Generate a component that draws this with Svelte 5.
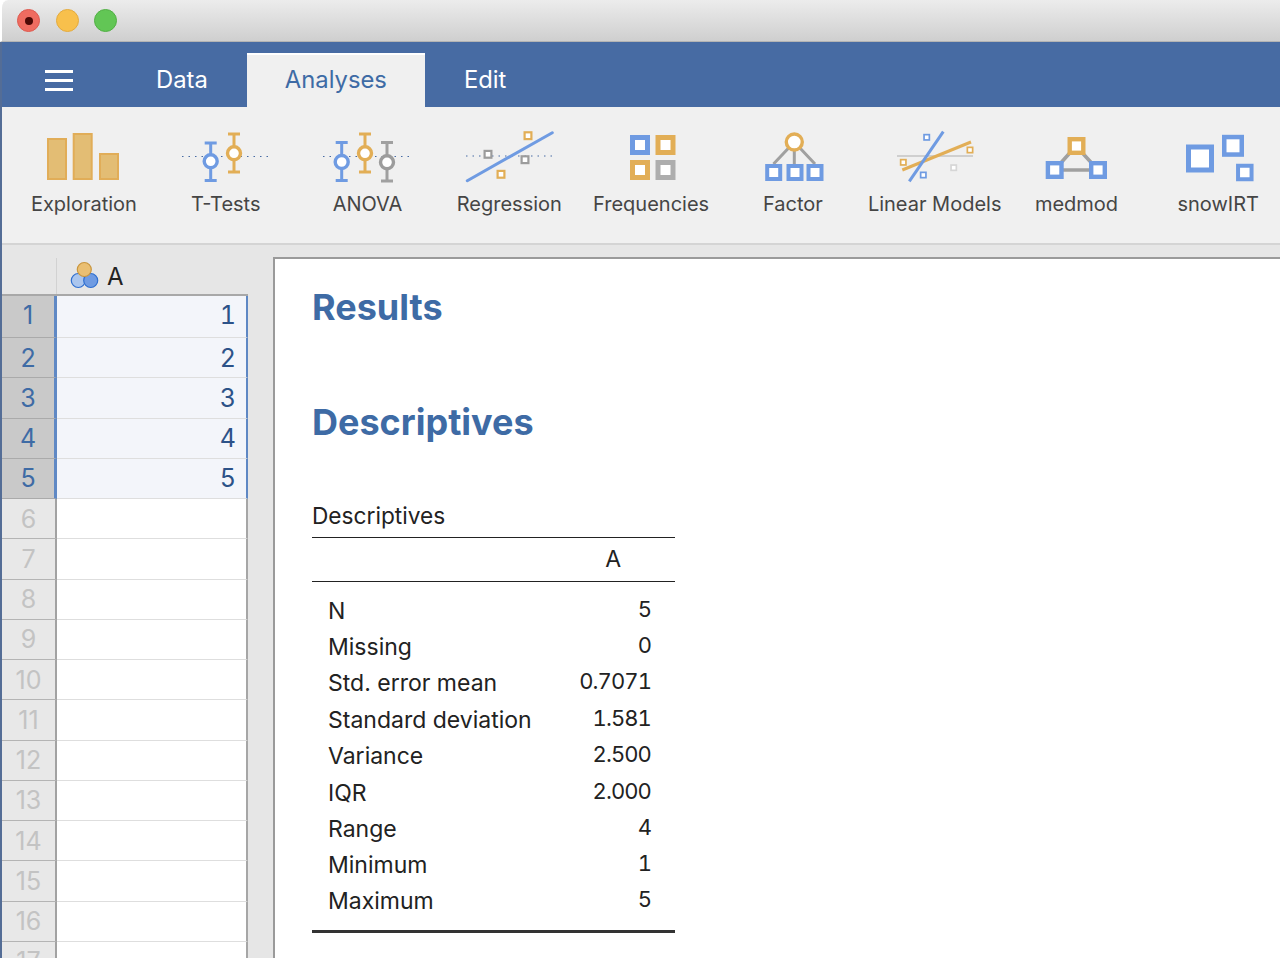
<script lang="ts">
  const rowCount = 17;
  const filled = 5;
  const rows = Array.from({ length: rowCount }, (_, i) => i + 1);

  const stats = [
    ["N", "5"],
    ["Missing", "0"],
    ["Std. error mean", "0.7071"],
    ["Standard deviation", "1.581"],
    ["Variance", "2.500"],
    ["IQR", "2.000"],
    ["Range", "4"],
    ["Minimum", "1"],
    ["Maximum", "5"],
  ];
</script>

{#snippet errorBar(x: number, top: number, bottom: number, cy: number, tone: string)}
  <g class={tone}>
    <path class="line" d="M{x - 6} {top}H{x + 6}M{x} {top}V{bottom}M{x - 6} {bottom}H{x + 6}" />
    <circle class="box" cx={x} cy={cy} r="6.5" />
  </g>
{/snippet}

{#snippet sq(cx: number, cy: number, size: number, weight: number, tone: string)}
  <rect
    class="box {tone}"
    x={cx - size / 2 + weight / 2}
    y={cy - size / 2 + weight / 2}
    width={size - weight}
    height={size - weight}
    style="stroke-width:{weight}"
  />
{/snippet}

<div class="window">
  <header class="titlebar">
    <span class="light red"><i></i></span>
    <span class="light amber"></span>
    <span class="light green"></span>
  </header>

  <div class="body">
    <nav class="tabs">
      <button class="menu" aria-label="Menu"><span></span><span></span><span></span></button>
      <div class="tab">Data</div>
      <div class="tab active">Analyses</div>
      <div class="tab">Edit</div>
    </nav>

    <section class="ribbon">
      <div class="tool">
        <svg viewBox="0 0 100 60">
          <rect class="bar" x="14" y="14" width="18" height="40" />
          <rect class="bar" x="39.7" y="9" width="18" height="45" />
          <rect class="bar" x="66" y="29" width="18" height="25" />
        </svg>
        <span>Exploration</span>
      </div>
      <div class="tool">
        <svg viewBox="0 0 100 60">
          <path class="dots" d="M6 31.5H92" />
          {@render errorBar(34.7, 18, 55.5, 36.3, "bl")}
          {@render errorBar(58, 9, 47, 28.3, "or")}
        </svg>
        <span>T-Tests</span>
      </div>
      <div class="tool">
        <svg viewBox="0 0 100 60">
          <path class="dots" d="M6 31.5H92" />
          {@render errorBar(24.7, 17.5, 55.5, 37, "bl")}
          {@render errorBar(48, 9, 47, 28.3, "or")}
          {@render errorBar(70, 17.5, 56, 37.3, "gr")}
        </svg>
        <span>ANOVA</span>
      </div>
      <div class="tool">
        <svg viewBox="0 0 100 60">
          <path class="dots" d="M7 31H95" />
          <path class="line bl thick" d="M8.3 55.7L93.3 7.7" />
          {@render sq(69, 10.7, 9, 2.2, "or")}
          {@render sq(29, 29.3, 9, 2.2, "gr")}
          {@render sq(66, 34.7, 9, 2.2, "gr")}
          {@render sq(42, 49.3, 9, 2.2, "or")}
        </svg>
        <span>Regression</span>
      </div>
      <div class="tool">
        <svg viewBox="0 0 100 60">
          {@render sq(39, 20, 20, 5, "bl")}
          {@render sq(64.5, 20, 20, 5, "or")}
          {@render sq(39, 45, 20, 5, "or")}
          {@render sq(64.5, 45, 20, 5, "gy")}
        </svg>
        <span>Frequencies</span>
      </div>
      <div class="tool">
        <svg viewBox="0 0 100 60">
          <path class="line gr" d="M51.3 17L30.5 39M51.3 17V39M51.3 17L72 39" />
          {@render sq(30.7, 47.5, 17, 4, "bl")}
          {@render sq(52, 47.5, 17, 4, "bl")}
          {@render sq(72, 47.5, 17, 4, "bl")}
          <circle class="box or" cx="51.3" cy="17" r="8" />
        </svg>
        <span>Factor</span>
      </div>
      <div class="tool">
        <svg viewBox="0 0 100 60">
          <path class="hair" d="M12 31H88" />
          <path class="line or" d="M17.3 45L86 17" />
          <path class="line bl" d="M24.3 56.3L58.3 6.7" />
          {@render sq(41.7, 12.3, 7, 1.7, "bl")}
          {@render sq(85, 25, 7, 1.7, "or")}
          {@render sq(18.3, 37.3, 7, 1.7, "or")}
          {@render sq(38.3, 50, 7, 1.7, "bl")}
          {@render sq(68.7, 42.7, 7, 1.7, "pale")}
        </svg>
        <span>Linear Models</span>
      </div>
      <div class="tool">
        <svg viewBox="0 0 100 60">
          <path class="line gr wide" d="M50 21L28.5 45H72L50 21" />
          {@render sq(50.5, 21, 18, 4.4, "or")}
          {@render sq(28.7, 45, 18, 4.4, "bl")}
          {@render sq(72, 45, 18, 4.4, "bl")}
        </svg>
        <span>medmod</span>
      </div>
      <div class="tool">
        <svg viewBox="0 0 100 60">
          {@render sq(32, 33.5, 28, 5, "bl")}
          {@render sq(65, 20.8, 22, 4.5, "bl")}
          {@render sq(76.8, 47.5, 17.5, 4, "bl")}
        </svg>
        <span>snowIRT</span>
      </div>
    </section>

    <main class="workspace">
      <div class="sheet">
        <div class="sheet-head">
          <div class="corner"></div>
          <div class="col-title">
            <svg viewBox="0 0 30 30" class="var-icon">
              <circle class="v-light" cx="9.3" cy="19.5" r="7" />
              <circle class="v-dark" cx="21.7" cy="19.5" r="7" />
              <circle class="v-top" cx="15.3" cy="8.5" r="7" />
            </svg>
            <span>A</span>
          </div>
        </div>
        {#each rows as n}
          <div class="row" class:selected={n <= filled}>
            <div class="row-num">{n}</div>
            <div class="cell">{n <= filled ? n : ""}</div>
          </div>
        {/each}
      </div>

      <article class="results">
        <h1>Results</h1>
        <h1 class="second">Descriptives</h1>
        <div class="table-title">Descriptives</div>
        <table>
          <thead>
            <tr><th></th><th>A</th></tr>
          </thead>
          <tbody>
            {#each stats as [label, value]}
              <tr><td>{label}</td><td class="num">{value}</td></tr>
            {/each}
          </tbody>
        </table>
      </article>
    </main>
  </div>
</div>

<style>
  :global(body) { overflow: hidden; background: #fff; }
  .window {
    height: 958px; overflow: hidden;
    display: flex; flex-direction: column;
    font-family: Inter, "Liberation Sans", sans-serif;
  }

  .titlebar {
    flex: 0 0 42px; box-sizing: border-box;
    display: flex; align-items: center; gap: 15.5px;
    padding-left: 15px;
    background: linear-gradient(#ececec, #cfcfcf);
    border-bottom: 1px solid #b4b4b4;
    border-left: 2px solid #fff;
    border-top-left-radius: 8px;
  }
  .light {
    width: 23px; height: 23px; box-sizing: border-box; border-radius: 50%;
    display: flex; align-items: center; justify-content: center;
  }
  .light i { width: 8px; height: 8px; border-radius: 50%; background: #4d0a06; }
  .red { background: #ef6c60; border: 1px solid #de5a50; }
  .amber { background: #f8c04c; border: 1px solid #e4ab3e; }
  .green { background: #62c655; border: 1px solid #52b045; }

  .body {
    flex: 1; min-height: 0;
    display: flex; flex-direction: column;
    border-left: 2px solid #546d96;
  }

  .tabs {
    flex: 0 0 65px; box-sizing: border-box;
    display: flex; align-items: flex-end;
    background: #476ba3;
    padding-left: 115px;
    position: relative;
  }
  .menu {
    position: absolute; left: 43px; top: 28px;
    width: 28px; padding: 0; border: 0; background: none;
    display: flex; flex-direction: column; gap: 6px;
  }
  .menu span { display: block; height: 3px; background: #fff; }
  .tab {
    height: 54px; box-sizing: border-box;
    padding: 0 39px 1px;
    display: flex; align-items: center;
    font-size: 23.8px; color: #fff;
  }
  .tab.active {
    background: #f0f0f0; color: #3e6ba5;
    border-top: 2px solid #fff;
    padding: 0 38px 3px;
  }

  .ribbon {
    flex: 0 0 138px; box-sizing: border-box;
    display: flex; align-items: flex-start;
    background: #f0f0f0;
    border-bottom: 2px solid #d4d4d4;
    padding: 18px 0 0 11px;
    overflow: hidden;
  }
  .tool {
    flex: 0 0 141.8px;
    display: flex; flex-direction: column; align-items: center;
  }
  .tool svg { width: 100px; height: 60px; display: block; }
  .tool span {
    margin-top: 6px; font-size: 20px; line-height: 26px; color: #454545;
    white-space: nowrap;
  }

  .line { fill: none; stroke-width: 3; }
  .thick { stroke-width: 3; stroke-linecap: round; }
  .wide { stroke-width: 3.6; }
  .line.bl, .bl .line { stroke: #6f9be2; }
  .line.or, .or .line { stroke: #e2ae56; }
  .line.gr, .gr .line { stroke: #a0a0a0; }
  .box { fill: #fff; stroke-width: 3.4; }
  .box.bl, .bl .box { stroke: #6f9be2; }
  .box.or, .or .box { stroke: #e2ae56; }
  .box.gr, .gr .box { stroke: #9c9c9c; }
  .box.gy { stroke: #adadad; }
  .box.pale { stroke: #d6d6d6; }
  .bar { fill: #e3bd74; stroke: #e1ad58; stroke-width: 2; }
  .dots { fill: none; stroke: #476ba3; stroke-width: 1.2; stroke-dasharray: 1.5 5; }
  .hair { fill: none; stroke: #c4c4c4; stroke-width: 1.5; }

  .workspace {
    flex: 1; min-height: 0;
    display: flex; align-items: stretch;
    background: #e6e6e6;
  }

  .sheet { flex: 0 0 246px; padding-top: 13px; }
  .sheet-head {
    height: 38px; box-sizing: border-box;
    display: flex;
    border-bottom: 2px solid #a8a8a8;
  }
  .corner { flex: 0 0 54px; border-right: 1px solid #d2d2d2; }
  .col-title {
    flex: 1; display: flex; align-items: center; gap: 8px;
    padding-left: 12px;
    font-size: 24px; color: #222;
  }
  .var-icon { width: 30px; height: 30px; }
  .v-light { fill: #abc6ee; stroke: #2f6fd0; stroke-width: 1.2; }
  .v-dark { fill: #6f9be2; stroke: #2f6fd0; stroke-width: 1.2; }
  .v-top { fill: #eabf72; stroke: #c9963f; stroke-width: 1.2; }

  .row { display: flex; height: 40.25px; box-sizing: border-box; }
  .row:nth-child(2) { height: 42px; }
  .row:nth-child(2) > div { padding-bottom: 4px; }
  .row-num {
    flex: 0 0 53px;
    display: flex; align-items: center; justify-content: center;
    font-size: 25px; color: #c3c3c3;
    background: #e8e8e8;
    border-right: 2px solid #a2a2a2;
    border-bottom: 1.5px solid #b4b4b4;
  }
  .cell {
    flex: 1;
    display: flex; align-items: center; justify-content: flex-end;
    padding-right: 10px;
    font-size: 25px; color: #2c5288;
    font-variant-numeric: tabular-nums;
    background: #fff;
    border-right: 2px solid #a6a6a6;
    border-bottom: 1.5px solid #dedede;
  }
  .selected .row-num {
    background: #c9c9c9; color: #3e6ba5;
    border-right: 3px solid #5f88c4;
    flex-basis: 52px;
    border-bottom-color: #aaa;
  }
  .selected .cell {
    background: #f3f5fa;
    border-right-color: #5f88c4;
  }

  .results {
    flex: 1; margin: 12px 0 0 25px; box-sizing: border-box;
    background: #fff;
    border-left: 2px solid #9a9a9a;
    border-top: 2px solid #9a9a9a;
    padding: 27px 0 0 37px;
  }
  h1 {
    margin: 0; font-size: 36px; line-height: 42px; font-weight: 700;
    color: #3e6ba5;
  }
  h1.second { margin-top: 73px; }
  .table-title { margin-top: 58px; font-size: 22.7px; line-height: 30px; color: #222; }
  table {
    width: 363px; margin-top: 6px; border-collapse: collapse;
    border-top: 1.5px solid #222;
    border-bottom: 3.5px solid #333;
    font-size: 23px; color: #222;
  }
  th { font-weight: 400; height: 41px; text-align: right; padding: 0 54px 2px 0; }
  thead tr { border-bottom: 1.5px solid #222; }
  td { box-sizing: border-box; height: 36.4px; padding: 0 0 0 16px; }
  tbody tr:first-child td { height: 47.4px; padding-top: 11px; }
  tbody tr:last-child td { height: 47.4px; padding-bottom: 11px; }
  td.num {
    text-align: right; padding-right: 24px; padding-bottom: 4px;
    font-size: 22px; letter-spacing: -0.9px; font-variant-numeric: tabular-nums;
  }
  tbody tr:last-child td.num { padding-bottom: 15px; }
</style>
